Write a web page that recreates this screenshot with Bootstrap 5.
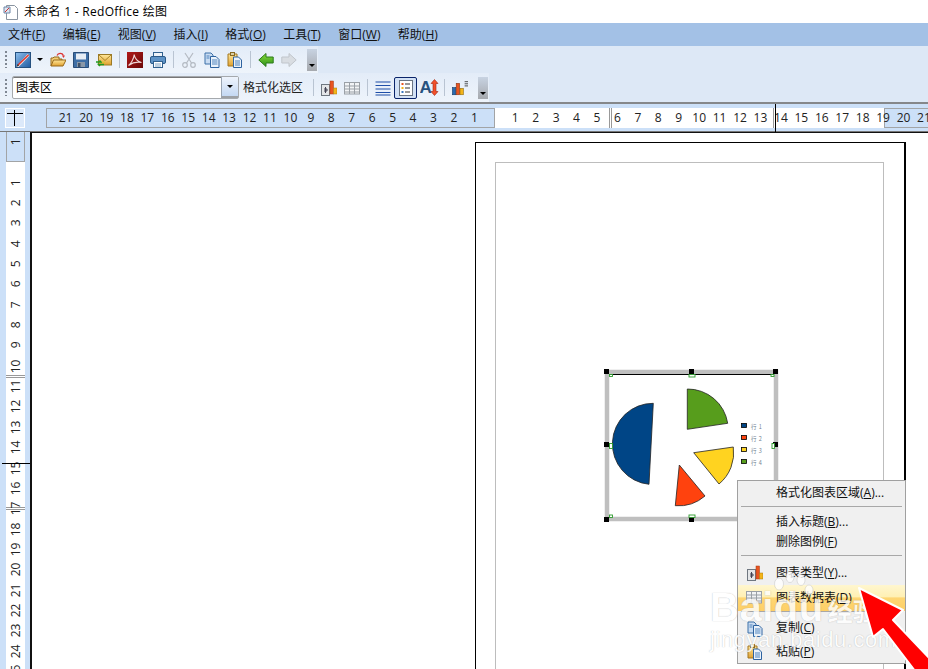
<!DOCTYPE html>
<html lang="zh">
<head>
<meta charset="utf-8">
<title>未命名 1 - RedOffice 绘图</title>
<link rel="stylesheet" href="https://cdn.jsdelivr.net/npm/bootstrap@5.3.0/dist/css/bootstrap.min.css">
<style>
html,body{margin:0;height:100%;overflow:hidden;background:#fff}
body{font-family:"Open Sans","Noto Sans CJK SC",sans-serif;font-size:12px;line-height:1;color:#000}
u{text-underline-offset:1px;text-decoration-thickness:1px}
.appwin{width:928px;height:669px;overflow:hidden}
.ico{width:16px;height:16px;flex:none;display:block}
.ico-wide{width:19px;height:17px;flex:none;display:block;margin-right:-2px}
.titlerow{height:23px;padding-left:3px;gap:5px;letter-spacing:.28px}
.menurow{height:23px;background:#a3c1e6;padding-left:8px;gap:17.4px}
.menurow span{color:#111}
.barzone{background:#dde8f6}
.tb1{height:27px}
.tb2{height:29px}
.tbinner{height:100%;padding-left:5px;gap:7px;background:linear-gradient(#e3ecf8,#eef4fb)}
.tb1 .tbinner{width:318px}
.tb2 .tbinner{width:489px}
.grip{width:2px;height:17px;flex:none;background:repeating-linear-gradient(#7f8792 0 2px,transparent 2px 4px);margin-right:-2px}
.firsticon{margin-left:3px}
.vsep{width:1px;height:17px;background:#b9c4d2;flex:none}
.caret-mini{width:0;height:0;border-left:3px solid transparent;border-right:3px solid transparent;border-top:3px solid #000;flex:none;margin-left:-1px}
.overflowbtn{width:10px;height:22px;flex:none;background:linear-gradient(#c8d3e2,#a6a9ae);margin-left:3px;padding-bottom:4px}
.combo{width:227px;height:23px;background:#fff;border:1px solid #a5a9ad;border-radius:2px;padding-left:3px;box-shadow:inset 0 1px 0 #777}
.combobtn{width:17px;height:21px;background:linear-gradient(#eef4fc,#c4d8f3);border-left:1px solid #9aa5b3;border-bottom:2px solid #9da1a6}
.fmtlabel{margin-left:-3px;margin-right:3px;width:60px;white-space:nowrap;color:#222}
.pressed{width:23px;height:22px;margin:0 -4px;border:1px solid #0a246a;border-radius:2px;background:#d2e1f5}
.hrule{height:30px;background:#cce0f8;border-top:2px solid #85878a;border-bottom:1px solid #777;padding-top:4px}
.corner{width:20px;height:20px;margin-left:5px;margin-right:21px;background:#dce9fa;border:1px solid #fff;flex:none}
.hstrip{height:20px;flex:1}
.segblue{background:#cce0f8;border:1px solid #a2a4a6;width:449px;flex:none}
.segwhite{background:#fff;width:389px;flex:none}
.dbl-a{width:3px;height:100%;border-left:1px solid #999;border-right:1px solid #999;flex:none}
.hnums{left:9.4px;top:0;height:20px}
.hnums span,.vnums span{display:flex;align-items:center;justify-content:center;flex:none;color:#222}
.hnums span{width:20.45px;height:20px}
.cursorx{left:775px;top:0;width:1px;height:29px;background:#000}
.cursory{left:2px;top:331px;width:28px;height:1px;background:#000}
.lowerzone{height:537px}
.vrule{width:30px;flex:none;background:#cce0f8;padding-left:6px}
.vstrip{width:19px;height:100%}
.vseg1{height:30px;border:1px solid #a2a4a6;border-top:0;flex:none}
.vseg2{background:#fff;flex:1}
.vnums{left:0;top:0;width:19px}
.vnums span{height:20.35px;width:19px;writing-mode:vertical-rl;transform:rotate(180deg)}
.dbl-b{left:0;width:19px;height:3px;border-top:1px solid #999;border-bottom:1px solid #999}
.canvasarea{flex:1;background:#fff;border-left:2px solid #111;border-top:1px solid #111;overflow:hidden}
.sheet{left:443px;top:9px;width:431px;height:620px;border:1px solid #000;border-right:2px solid #000;background:#fff;padding:19px}
.marginbox{border:1px solid #bdbdbd;width:389px;height:100%}
.chartcanvas{left:568px;top:232px;width:190px;height:165px}
.ctxmenu.dropdown-menu{display:block;left:737px;top:480px;width:169px;height:184px;min-width:0;padding:2px 1px 0;background:#f0f0f0;border:1px solid #a0a0a0;border-radius:0;font-size:12px;--bs-dropdown-divider-margin-y:0}
.ctxitem{height:20px;display:flex;align-items:center;padding-left:37px;color:#111;position:relative}
.ctxitem.tall{height:23.5px}
.ctxitem .ico{position:absolute;left:8px;top:4px}
.ctxitem.hot{background:linear-gradient(#fff6cf,#fff0b4 45%,#fed673 50%,#fecf66);height:26px;margin:0 -1px;padding-left:38px}
.ctxmenu .dropdown-divider{margin:3px 2px 5px;border-top:1px solid #a8a8a8;opacity:1}
.ctxdiv-low{margin:0 2px 5px !important}
.overtop{z-index:1100}
.wmark{left:710px;top:589px;color:#fff;white-space:nowrap;pointer-events:none;text-shadow:0 0 1px rgba(110,110,110,.6)}
.wmark-big{font:700 40px/36px "Liberation Sans",sans-serif;opacity:.8;height:38px;letter-spacing:.5px}
.wmark-big b{font:700 25px/36px "Noto Sans CJK SC",sans-serif;margin-left:4px;letter-spacing:0}
.wmark-url{font:400 22px/24px "Liberation Sans",sans-serif;letter-spacing:.55px;opacity:.8;margin-top:1px}
.overlaysvg{left:690px;top:560px;width:238px;height:109px}
.arrowsvg{left:840px;top:570px;width:88px;height:99px}
</style>
</head>
<body>
<svg width="0" height="0" class="position-absolute" aria-hidden="true">
<defs>
<linearGradient id="gBlue" x1="0" y1="0" x2="1" y2="1"><stop offset="0" stop-color="#8fc0ee"/><stop offset="1" stop-color="#1e5aa0"/></linearGradient>
<linearGradient id="gYel" x1="0" y1="0" x2="0" y2="1"><stop offset="0" stop-color="#ffe79a"/><stop offset="1" stop-color="#e0a030"/></linearGradient>
<linearGradient id="gGrn" x1="0" y1="0" x2="0" y2="1"><stop offset="0" stop-color="#8bdc3a"/><stop offset="1" stop-color="#2a8f1a"/></linearGradient>
<linearGradient id="gRed" x1="0" y1="0" x2="1" y2="1"><stop offset="0" stop-color="#b01818"/><stop offset="1" stop-color="#6a0808"/></linearGradient>
<symbol id="i-edit" viewBox="0 0 16 16"><rect x=".5" y=".5" width="15" height="15" fill="url(#gBlue)" stroke="#24507f"/><path d="M1.500 14.500 12.500 2l2 1.800L3.500 15z" fill="#fbe3dc"/><path d="M3 13 13.500 3" stroke="#e0342a" stroke-width="1.400"/><path d="M1.500 14.800 2.700 12l1.500 1.500z" fill="#333"/></symbol>
<symbol id="i-open" viewBox="0 0 16 16"><path d="M1 14V6h2l1-1h5v2h3v2" fill="#f2cf76" stroke="#97681a"/><path d="M1 14l2.500-6H16l-3 6z" fill="url(#gYel)" stroke="#97681a"/><path d="M7 3.500C8 1 12 .5 13.500 3.500" fill="none" stroke="#d33" stroke-width="1.200"/><path d="M12 3.500h3l-1.500 2.500z" fill="#d33"/></symbol>
<symbol id="i-save" viewBox="0 0 16 16"><path d="M.5.500h15v15H.5z" fill="#3f6fa6" stroke="#2a4d78"/><rect x="3" y="1.500" width="10" height="6" fill="#e8eef5"/><rect x="4" y="10" width="8" height="5" fill="#8a98a8"/><rect x="5" y="11" width="2.500" height="4" fill="#3f5168"/></symbol>
<symbol id="i-mail" viewBox="0 0 16 16"><rect x="2.500" y="2.500" width="13" height="10.500" fill="url(#gYel)" stroke="#9b7a26"/><path d="M3 3l6 5.500L15 3" fill="none" stroke="#a88428"/><path d="M0 10h5l-1.500-1.500M8 12.500H2.500L4 14" fill="none" stroke="#1f9c1f" stroke-width="1.400"/><path d="M6 10.500h3" stroke="#d8c030" stroke-width="1.400"/></symbol>
<symbol id="i-pdf" viewBox="0 0 16 16"><rect width="16" height="16" fill="url(#gRed)"/><path d="M1.500 13.500C4 12 7 6 7.200 2.500 7.600 6 10.500 10 14.500 10.500 10 9.500 5 11 1.500 13.500z" fill="none" stroke="#f0d8d8" stroke-width="1.100"/></symbol>
<symbol id="i-print" viewBox="0 0 16 16"><rect x="3.500" y=".5" width="9" height="5" fill="#eef3f8" stroke="#31618f"/><rect x=".5" y="4.500" width="15" height="7" rx="1.500" fill="#5f93c6" stroke="#2c5a88"/><rect x="3.500" y="9.500" width="9" height="6" fill="#fff" stroke="#31618f"/><path d="M5 12h6M5 14h6" stroke="#7fa3c4"/></symbol>
<symbol id="i-cut" viewBox="0 0 16 16"><path d="M4 1l6.500 10M12 1 5.500 11" stroke="#b4bac2" stroke-width="1.200" fill="none"/><circle cx="4" cy="13" r="2.300" fill="none" stroke="#b4bac2" stroke-width="1.200"/><circle cx="12" cy="13" r="2.300" fill="none" stroke="#b4bac2" stroke-width="1.200"/></symbol>
<symbol id="i-copy" viewBox="0 0 16 16"><path d="M1 1h6l2 2v9H1z" fill="#c9dcf2" stroke="#3c70a8"/><path d="M6.500 4.500h5.500l3 3v8H6.500z" fill="#eaf2fb" stroke="#2e63a0"/><path d="M8 8h5.500M8 10h5.500M8 12h5.500M2.500 4h3M2.500 6h3" stroke="#4f83bd"/></symbol>
<symbol id="i-paste" viewBox="0 0 16 16"><path d="M1 2h9v12H1z" fill="url(#gYel)" stroke="#a3761e"/><rect x="3.500" y=".5" width="4" height="3" fill="#d9cfa8" stroke="#8a6a20"/><path d="M6.500 5h5l3 3v7.500h-8z" fill="#eaf2fb" stroke="#2e63a0"/><path d="M8 9h5M8 11h5M8 13h5" stroke="#4f83bd"/></symbol>
<symbol id="i-back" viewBox="0 0 16 16"><path d="M.8 8 8 1.500V5h7.200v6H8v3.500z" fill="url(#gGrn)" stroke="#2c7a1c"/></symbol>
<symbol id="i-fwd" viewBox="0 0 16 16"><path d="M15.200 8 8 1.500V5H.8v6H8v3.500z" fill="#d9dde2" stroke="#c0c5cb"/></symbol>
<symbol id="i-chart" viewBox="0 0 16 16"><rect x=".5" y="4.500" width="8" height="11" fill="#e4e6e8" stroke="#6f7780"/><path d="M4.500 7v6M3 9h3v2H3" stroke="#445" fill="none"/><rect x="9" y="1" width="3.500" height="13" fill="#e85420" stroke="#a33810" stroke-width=".5"/><rect x="12.500" y="8" width="3.500" height="6" fill="#f4b418" stroke="#a57a10" stroke-width=".5"/></symbol>
<symbol id="i-table" viewBox="0 0 16 16"><rect x=".5" y="2.500" width="15" height="11.500" fill="#f2f4f6" stroke="#9aa0a6"/><path d="M.5 6h15M.5 9h15M.5 12h15M5.500 2.500V14M10.500 2.500V14" stroke="#9aa0a6"/></symbol>
<symbol id="i-lines" viewBox="0 0 16 16"><path d="M.5 2h15M.5 5.500h15M.5 9h15M.5 12.500h15M.5 15h15" stroke="#1f4fa8" stroke-width="1.100"/></symbol>
<symbol id="i-legend" viewBox="0 0 16 16"><rect x="1.500" y=".5" width="13" height="15" fill="#fff" stroke="#6b7684"/><rect x="3.500" y="3" width="2" height="2" fill="#e85420"/><rect x="3.500" y="7" width="2" height="2" fill="#f4b418"/><rect x="3.500" y="11" width="2" height="2" fill="#3a78c0"/><path d="M7 4h5M7 8h5M7 12h5" stroke="#333"/></symbol>
<symbol id="i-az" viewBox="0 0 19 17"><text x="-.5" y="14" font-family="Liberation Sans" font-weight="700" font-size="17" fill="#27527f">A</text><path d="M14.500 .5 18 4.500h-2v8h2l-3.500 4-3.500-4h2v-8h-2z" fill="#f2502a" stroke="#a02510" stroke-width=".6"/></symbol>
<symbol id="i-chlines" viewBox="0 0 19 18"><rect x=".5" y="8.500" width="4" height="8.500" fill="#2a6ab0" stroke="#123a66" stroke-width=".7"/><rect x="5" y="3.500" width="4" height="13.500" fill="#e85420" stroke="#8d3010" stroke-width=".7"/><rect x="9.500" y="9.500" width="4" height="7.500" fill="#f4b418" stroke="#8d6a10" stroke-width=".7"/><path d="M15 1.500h4M15 4h4M15 6.500h4" stroke="#333"/></symbol>
</defs>
</svg>

<div class="appwin position-relative">
  <div class="titlerow d-flex align-items-center">
    <svg class="ico" viewBox="0 0 16 16"><path d="M3.500 1.500h8l3 3v11h-11z" fill="#fff" stroke="#8a94a0"/><path d="M1 3h6v6H1z" fill="#dfe7f2" stroke="#6f87a8"/><path d="M2 8 6 4" stroke="#c33"/></svg>
    <span>未命名 1 - RedOffice 绘图</span>
  </div>
  <nav class="menurow d-flex align-items-center">
    <span>文件(<u>F</u>)</span><span>编辑(<u>E</u>)</span><span>视图(<u>V</u>)</span><span>插入(<u>I</u>)</span><span>格式(<u>O</u>)</span><span>工具(<u>T</u>)</span><span>窗口(<u>W</u>)</span><span>帮助(<u>H</u>)</span>
  </nav>
  <div class="barzone">
    <div class="tb1">
      <div class="tbinner d-flex align-items-center">
        <i class="grip"></i>
        <svg class="ico firsticon"><use href="#i-edit"/></svg><i class="caret-mini"></i>
        <svg class="ico"><use href="#i-open"/></svg>
        <svg class="ico"><use href="#i-save"/></svg>
        <svg class="ico"><use href="#i-mail"/></svg>
        <i class="vsep"></i>
        <svg class="ico"><use href="#i-pdf"/></svg>
        <svg class="ico"><use href="#i-print"/></svg>
        <i class="vsep"></i>
        <svg class="ico"><use href="#i-cut"/></svg>
        <svg class="ico"><use href="#i-copy"/></svg>
        <svg class="ico"><use href="#i-paste"/></svg>
        <i class="vsep"></i>
        <svg class="ico"><use href="#i-back"/></svg>
        <svg class="ico"><use href="#i-fwd"/></svg>
        <span class="overflowbtn d-flex align-items-end justify-content-center"><i class="caret-mini m-0"></i></span>
      </div>
    </div>
    <div class="tb2">
      <div class="tbinner d-flex align-items-center">
        <i class="grip"></i>
        <div class="combo d-flex align-items-center justify-content-between"><span>图表区</span><span class="combobtn d-flex align-items-center justify-content-center"><i class="caret-mini m-0"></i></span></div>
        <span class="fmtlabel">格式化选区</span>
        <i class="vsep"></i>
        <svg class="ico"><use href="#i-chart"/></svg>
        <svg class="ico"><use href="#i-table"/></svg>
        <i class="vsep"></i>
        <svg class="ico"><use href="#i-lines"/></svg>
        <span class="pressed d-flex align-items-center justify-content-center"><svg class="ico"><use href="#i-legend"/></svg></span>
        <svg class="ico-wide"><use href="#i-az"/></svg>
        <i class="vsep"></i>
        <svg class="ico"><use href="#i-chlines"/></svg>
        <span class="overflowbtn d-flex align-items-end justify-content-center"><i class="caret-mini m-0"></i></span>
      </div>
    </div>
  </div>

  <div class="hrule d-flex position-relative">
    <div class="corner d-flex align-items-center justify-content-center">
      <svg width="18" height="18" viewBox="0 0 18 18"><path d="M1 4.500h16M8.500 1v16" stroke="#000" fill="none"/></svg>
    </div>
    <div class="hstrip d-flex position-relative">
      <div class="segblue"></div>
      <div class="segwhite d-flex"><span style="width:114px"></span><i class="dbl-a"></i><span style="width:161px"></span><i class="dbl-a"></i></div>
      <div class="segblue flex-grow-1 border-end-0"></div>
      <div class="hnums position-absolute d-flex">
        <span>21</span><span>20</span><span>19</span><span>18</span><span>17</span><span>16</span><span>15</span><span>14</span><span>13</span><span>12</span><span>11</span><span>10</span><span>9</span><span>8</span><span>7</span><span>6</span><span>5</span><span>4</span><span>3</span><span>2</span><span>1</span><span></span><span>1</span><span>2</span><span>3</span><span>4</span><span>5</span><span>6</span><span>7</span><span>8</span><span>9</span><span>10</span><span>11</span><span>12</span><span>13</span><span>14</span><span>15</span><span>16</span><span>17</span><span>18</span><span>19</span><span>20</span><span>21</span>
      </div>
    </div>
    <i class="cursorx position-absolute"></i>
  </div>

  <div class="lowerzone d-flex position-relative">
    <div class="vrule">
      <div class="vstrip d-flex flex-column position-relative overflow-hidden">
        <div class="vseg1"></div>
        <div class="vseg2"></div>
        <i class="dbl-b position-absolute" style="top:243px"></i>
        <i class="dbl-b position-absolute" style="top:375px"></i>
        <div class="vnums position-absolute d-flex flex-column">
          <span>1</span><span></span><span>1</span><span>2</span><span>3</span><span>4</span><span>5</span><span>6</span><span>7</span><span>8</span><span>9</span><span>10</span><span>11</span><span>12</span><span>13</span><span>14</span><span>15</span><span>16</span><span>17</span><span>18</span><span>19</span><span>20</span><span>21</span><span>22</span><span>23</span><span>24</span><span>25</span>
        </div>
      </div>
    </div>
    <div class="canvasarea position-relative">
      <div class="sheet position-absolute"><div class="marginbox"></div></div>
      <svg class="chartcanvas position-absolute" viewBox="600 365 190 165" font-family="Noto Sans CJK SC, sans-serif">
        <rect x="607" y="372" width="169" height="147" fill="#fff" stroke="#bfbfbf" stroke-width="4.500"/>
        <path d="M609.500 374.500H774" stroke="#000" stroke-width="1"/>
        <path d="M653.300 403.300 649 484.300A40.600 40.600 0 0 1 653.300 403.300Z" fill="#004586" stroke="#222" stroke-width=".8"/>
        <path d="M687.300 389V429.300L727.700 423.300A40.500 40.500 0 0 0 687.300 389Z" fill="#579d1c" stroke="#222" stroke-width=".8"/>
        <path d="M693.700 452.700 733.300 447A40.500 40.500 0 0 1 719 484Z" fill="#ffd320" stroke="#222" stroke-width=".8"/>
        <path d="M679.300 465 705 496A40.500 40.500 0 0 1 675.300 505.700Z" fill="#ff420e" stroke="#222" stroke-width=".8"/>
        <g stroke="#000" stroke-width=".8">
          <rect x="741.500" y="423.500" width="5" height="4" fill="#004586"/>
          <rect x="741.500" y="435.500" width="5" height="4" fill="#ff420e"/>
          <rect x="741.500" y="447.500" width="5" height="4" fill="#ffd320"/>
          <rect x="741.500" y="459.500" width="5" height="4" fill="#579d1c"/>
        </g>
        <g font-size="5.500" fill="#6f7f92" letter-spacing=".5">
          <text x="751" y="429">行 1</text><text x="751" y="441">行 2</text><text x="751" y="453">行 3</text><text x="751" y="465">行 4</text>
        </g>
        <g fill="#000">
          <rect x="604" y="369" width="5" height="5"/><rect x="689" y="369" width="5" height="5"/><rect x="773" y="369" width="5" height="5"/>
          <rect x="604" y="442" width="5" height="5"/><rect x="773" y="442" width="5" height="5"/>
          <rect x="604" y="517" width="5" height="5"/><rect x="689" y="517" width="5" height="5"/>
        </g>
        <g fill="#fff" stroke="#2a9a2a" stroke-width=".9">
          <rect x="609.500" y="374.500" width="3" height="2"/><rect x="689" y="374.500" width="6" height="2.500"/><rect x="771" y="374.500" width="3" height="2"/>
          <rect x="609.500" y="443.500" width="3" height="5"/><rect x="772" y="443.500" width="2.500" height="5"/>
          <rect x="609.500" y="515" width="3" height="2.500"/><rect x="689" y="515" width="6" height="2.500"/>
        </g>
      </svg>
    </div>
    <i class="cursory position-absolute"></i>
  </div>

  <div class="ctxmenu dropdown-menu position-absolute">
    <div class="ctxitem"><span>格式化图表区域(<u>A</u>)...</span></div>
    <hr class="dropdown-divider">
    <div class="ctxitem"><span>插入标题(<u>B</u>)...</span></div>
    <div class="ctxitem"><span>删除图例(<u>F</u>)</span></div>
    <hr class="dropdown-divider">
    <div class="ctxitem tall"><svg class="ico"><use href="#i-chart"/></svg><span>图表类型(<u>Y</u>)...</span></div>
    <div class="ctxitem tall hot"><svg class="ico"><use href="#i-table"/></svg><span>图表数据表(<u>D</u>)</span></div>
    <hr class="dropdown-divider ctxdiv-low">
    <div class="ctxitem tall"><svg class="ico"><use href="#i-copy"/></svg><span>复制(<u>C</u>)</span></div>
    <div class="ctxitem tall"><svg class="ico"><use href="#i-paste"/></svg><span>粘贴(<u>P</u>)</span></div>
  </div>

  <div class="wmark position-absolute overtop">
    <div class="wmark-big">Baidu<b>经验</b></div>
    <div class="wmark-url">jingyan.baidu.com</div>
  </div>
  <svg class="overlaysvg position-absolute overtop" viewBox="690 560 238 109" opacity=".8">
    <g fill="#fff" stroke="#aaa" stroke-width=".4">
      <ellipse cx="779" cy="584" rx="4.500" ry="6"/><ellipse cx="790" cy="577" rx="4" ry="5.500"/><ellipse cx="801" cy="580" rx="4" ry="5.500"/><ellipse cx="809" cy="590" rx="4" ry="5"/>
    </g>
  </svg>
  <svg class="arrowsvg position-absolute overtop" viewBox="840 570 88 99">
    <path d="M859 588 903 610 893 620 930 659V671H915L883 629 873 637Z" fill="#f00" stroke="#fff" stroke-width="2" stroke-linejoin="round"/>
  </svg>
</div>
<script src="https://cdn.jsdelivr.net/npm/bootstrap@5.3.0/dist/js/bootstrap.bundle.min.js"></script>
</body>
</html>
